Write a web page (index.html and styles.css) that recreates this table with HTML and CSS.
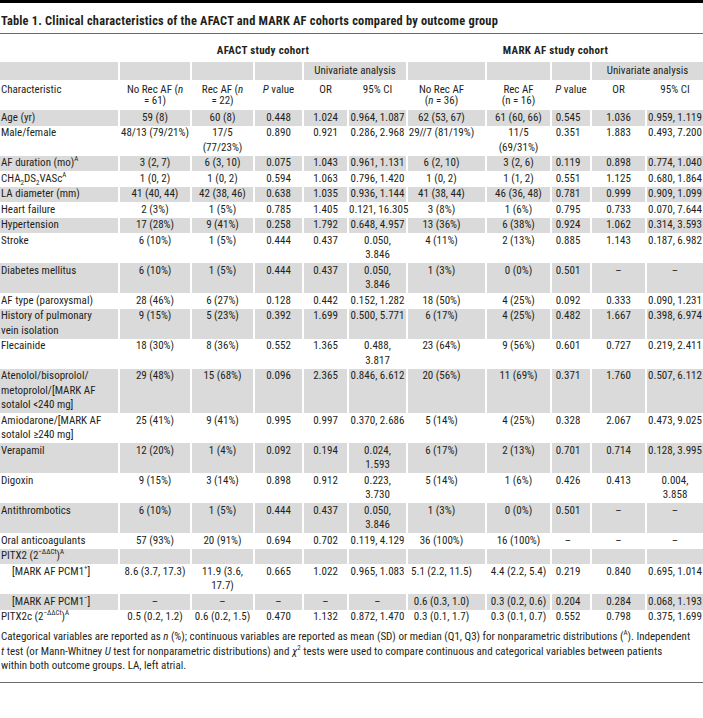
FILE: index.html
```html
<!DOCTYPE html>
<html lang="en">
<head>
<meta charset="utf-8">
<title>Table 1</title>
<link rel="stylesheet" href="styles.css">
</head>
<body>
<div class="wrap">
  <h1 class="title">Table 1. Clinical characteristics of the AFACT and MARK AF cohorts compared by outcome group</h1>
  <table class="tbl">
    <colgroup>
      <col class="c-char"><col class="c-a1"><col class="c-a2"><col class="c-a3"><col class="c-a4"><col class="c-a5">
      <col class="c-m1"><col class="c-m2"><col class="c-m3"><col class="c-m4"><col class="c-m5">
    </colgroup>
    <thead>
      <tr class="group">
        <th></th>
        <th colspan="5">AFACT study cohort</th>
        <th colspan="5">MARK AF study cohort</th>
      </tr>
      <tr class="uni">
        <th></th><th></th><th></th><th></th>
        <th colspan="2">Univariate analysis</th>
        <th></th><th></th><th></th>
        <th colspan="2">Univariate analysis</th>
      </tr>
      <tr class="cols">
        <th class="first">Characteristic</th>
        <th>No Rec AF (<i>n</i><br>= 61)</th>
        <th>Rec AF (<i>n</i><br>= 22)</th>
        <th><i>P</i> value</th>
        <th>OR</th>
        <th>95% CI</th>
        <th>No Rec AF<br>(<i>n</i> = 36)</th>
        <th>Rec AF<br>(n = 16)</th>
        <th><i>P</i> value</th>
        <th>OR</th>
        <th>95% CI</th>
      </tr>
    </thead>
    <tbody>
      <tr><td class="first">Age (yr)</td><td>59 (8)</td><td>60 (8)</td><td>0.448</td><td>1.024</td><td>0.964, 1.087</td><td>62 (53, 67)</td><td>61 (60, 66)</td><td>0.545</td><td>1.036</td><td>0.959, 1.119</td></tr>
      <tr><td class="first">Male/female</td><td>48/13 (79/21%)</td><td>17/5<br>(77/23%)</td><td>0.890</td><td>0.921</td><td>0.286, 2.968</td><td>29//7 (81/19%)</td><td>11/5<br>(69/31%)</td><td>0.351</td><td>1.883</td><td>0.493, 7.200</td></tr>
      <tr><td class="first">AF duration (mo)<sup>A</sup></td><td>3 (2, 7)</td><td>6 (3, 10)</td><td>0.075</td><td>1.043</td><td>0.961, 1.131</td><td>6 (2, 10)</td><td>3 (2, 6)</td><td>0.119</td><td>0.898</td><td>0.774, 1.040</td></tr>
      <tr><td class="first">CHA<sub>2</sub>DS<sub>2</sub>VASc<sup>A</sup></td><td>1 (0, 2)</td><td>1 (0, 2)</td><td>0.594</td><td>1.063</td><td>0.796, 1.420</td><td>1 (0, 2)</td><td>1 (1, 2)</td><td>0.551</td><td>1.125</td><td>0.680, 1.864</td></tr>
      <tr><td class="first">LA diameter (mm)</td><td>41 (40, 44)</td><td>42 (38, 46)</td><td>0.638</td><td>1.035</td><td>0.936, 1.144</td><td>41 (38, 44)</td><td>46 (36, 48)</td><td>0.781</td><td>0.999</td><td>0.909, 1.099</td></tr>
      <tr><td class="first">Heart failure</td><td>2 (3%)</td><td>1 (5%)</td><td>0.785</td><td>1.405</td><td>0.121, 16.305</td><td>3 (8%)</td><td>1 (6%)</td><td>0.795</td><td>0.733</td><td>0.070, 7.644</td></tr>
      <tr><td class="first">Hypertension</td><td>17 (28%)</td><td>9 (41%)</td><td>0.258</td><td>1.792</td><td>0.648, 4.957</td><td>13 (36%)</td><td>6 (38%)</td><td>0.924</td><td>1.062</td><td>0.314, 3.593</td></tr>
      <tr><td class="first">Stroke</td><td>6 (10%)</td><td>1 (5%)</td><td>0.444</td><td>0.437</td><td>0.050,<br>3.846</td><td>4 (11%)</td><td>2 (13%)</td><td>0.885</td><td>1.143</td><td>0.187, 6.982</td></tr>
      <tr><td class="first">Diabetes mellitus</td><td>6 (10%)</td><td>1 (5%)</td><td>0.444</td><td>0.437</td><td>0.050,<br>3.846</td><td>1 (3%)</td><td>0 (0%)</td><td>0.501</td><td>–</td><td>–</td></tr>
      <tr><td class="first">AF type (paroxysmal)</td><td>28 (46%)</td><td>6 (27%)</td><td>0.128</td><td>0.442</td><td>0.152, 1.282</td><td>18 (50%)</td><td>4 (25%)</td><td>0.092</td><td>0.333</td><td>0.090, 1.231</td></tr>
      <tr><td class="first">History of pulmonary<br>vein isolation</td><td>9 (15%)</td><td>5 (23%)</td><td>0.392</td><td>1.699</td><td>0.500, 5.771</td><td>6 (17%)</td><td>4 (25%)</td><td>0.482</td><td>1.667</td><td>0.398, 6.974</td></tr>
      <tr><td class="first">Flecainide</td><td>18 (30%)</td><td>8 (36%)</td><td>0.552</td><td>1.365</td><td>0.488,<br>3.817</td><td>23 (64%)</td><td>9 (56%)</td><td>0.601</td><td>0.727</td><td>0.219, 2.411</td></tr>
      <tr><td class="first">Atenolol/bisoprolol/<br>metoprolol/[MARK AF<br>sotalol &lt;240 mg]</td><td>29 (48%)</td><td>15 (68%)</td><td>0.096</td><td>2.365</td><td>0.846, 6.612</td><td>20 (56%)</td><td>11 (69%)</td><td>0.371</td><td>1.760</td><td>0.507, 6.112</td></tr>
      <tr><td class="first">Amiodarone/[MARK AF<br>sotalol ≥240 mg]</td><td>25 (41%)</td><td>9 (41%)</td><td>0.995</td><td>0.997</td><td>0.370, 2.686</td><td>5 (14%)</td><td>4 (25%)</td><td>0.328</td><td>2.067</td><td>0.473, 9.025</td></tr>
      <tr><td class="first">Verapamil</td><td>12 (20%)</td><td>1 (4%)</td><td>0.092</td><td>0.194</td><td>0.024,<br>1.593</td><td>6 (17%)</td><td>2 (13%)</td><td>0.701</td><td>0.714</td><td>0.128, 3.995</td></tr>
      <tr><td class="first">Digoxin</td><td>9 (15%)</td><td>3 (14%)</td><td>0.898</td><td>0.912</td><td>0.223,<br>3.730</td><td>5 (14%)</td><td>1 (6%)</td><td>0.426</td><td>0.413</td><td>0.004,<br>3.858</td></tr>
      <tr><td class="first">Antithrombotics</td><td>6 (10%)</td><td>1 (5%)</td><td>0.444</td><td>0.437</td><td>0.050,<br>3.846</td><td>1 (3%)</td><td>0 (0%)</td><td>0.501</td><td>–</td><td>–</td></tr>
      <tr><td class="first">Oral anticoagulants</td><td>57 (93%)</td><td>20 (91%)</td><td>0.694</td><td>0.702</td><td>0.119, 4.129</td><td>36 (100%)</td><td>16 (100%)</td><td>–</td><td>–</td><td>–</td></tr>
      <tr><td class="first">PITX2 (2<sup>−ΔΔCt</sup>)<sup>A</sup></td><td></td><td></td><td></td><td></td><td></td><td></td><td></td><td></td><td></td><td></td></tr>
      <tr><td class="first sub">[MARK AF PCM1<sup>+</sup>]</td><td>8.6 (3.7, 17.3)</td><td>11.9 (3.6,<br>17.7)</td><td>0.665</td><td>1.022</td><td>0.965, 1.083</td><td>5.1 (2.2, 11.5)</td><td>4.4 (2.2, 5.4)</td><td>0.219</td><td>0.840</td><td>0.695, 1.014</td></tr>
      <tr><td class="first sub">[MARK AF PCM1<sup>−</sup>]</td><td>–</td><td>–</td><td>–</td><td>–</td><td>–</td><td>0.6 (0.3, 1.0)</td><td>0.3 (0.2, 0.6)</td><td>0.204</td><td>0.284</td><td>0.068, 1.193</td></tr>
      <tr><td class="first">PITX2c (2<sup>−ΔΔCt</sup>)<sup>A</sup></td><td>0.5 (0.2, 1.2)</td><td>0.6 (0.2, 1.5)</td><td>0.470</td><td>1.132</td><td>0.872, 1.470</td><td>0.3 (0.1, 1.7)</td><td>0.3 (0.1, 0.7)</td><td>0.552</td><td>0.798</td><td>0.375, 1.699</td></tr>
    </tbody>
  </table>
  <p class="note">Categorical variables are reported as <i>n</i> (%); continuous variables are reported as mean (SD) or median (Q1, Q3) for nonparametric distributions (<sup>A</sup>). Independent<br><i>t</i> test (or Mann-Whitney <i>U</i> test for nonparametric distributions) and <i>χ</i><sup>2</sup> tests were used to compare continuous and categorical variables between patients<br>within both outcome groups. LA, left atrial.</p>
</div>
</body>
</html>
```
FILE: styles.css
```css
html, body {
  margin: 0;
  padding: 0;
  background: #ffffff;
}

body {
  font-family: "Roboto Condensed", "Roboto", "Liberation Sans", sans-serif;
  font-size: 11px;
  color: #231f20;
}

.wrap {
  width: 703px;
  border-top: 3px solid #000000;
}

.title {
  margin: 0;
  padding: 10px 0 5px 1px;
  font-size: 12.4px;
  line-height: 15px;
  font-weight: 700;
  letter-spacing: 0.2px;
  border-bottom: 1px solid #6b6b6b;
}

.tbl {
  width: 703px;
  table-layout: fixed;
  border-collapse: separate;
  border-spacing: 0;
}

.c-char { width: 120px; }
.c-a1 { width: 72px; }
.c-a2 { width: 63px; }
.c-a3 { width: 49px; }
.c-a4 { width: 45px; }
.c-a5 { width: 59px; }
.c-m1 { width: 79px; }
.c-m2 { width: 65px; }
.c-m3 { width: 40px; }
.c-m4 { width: 55px; }
.c-m5 { width: 56px; }

.tbl th,
.tbl td {
  padding: 0.5px 0;
  line-height: 14.5px;
  font-weight: 400;
  text-align: center;
  vertical-align: top;
  white-space: nowrap;
  border-right: 2px solid #ffffff;
}

.tbl th:last-child,
.tbl td:last-child {
  border-right: 0;
}

.tbl td:nth-child(7),
.cols th:nth-child(7) {
  padding-right: 10px;
}

.tbl td:nth-child(9) {
  padding-right: 6px;
}

.tbl .first {
  text-align: left;
  padding-left: 1px;
}

.tbl .sub {
  padding-left: 12px;
}

.group th {
  font-weight: 700;
  letter-spacing: 0.3px;
  padding: 9.5px 0 4px;
}

.uni th {
  background: #dadada;
  padding: 2px 0 1.5px;
}

.cols th {
  line-height: 11.5px;
  padding-top: 3.5px;
  padding-bottom: 3.5px;
}

.tbl tbody tr:nth-child(odd) td {
  background: #dadada;
}

sup, sub {
  font-size: 7px;
  line-height: 0;
}

.note {
  margin: 5px 0 0;
  padding: 0 0 8px 1px;
  line-height: 14.5px;
  border-bottom: 1px solid #6b6b6b;
}
```
